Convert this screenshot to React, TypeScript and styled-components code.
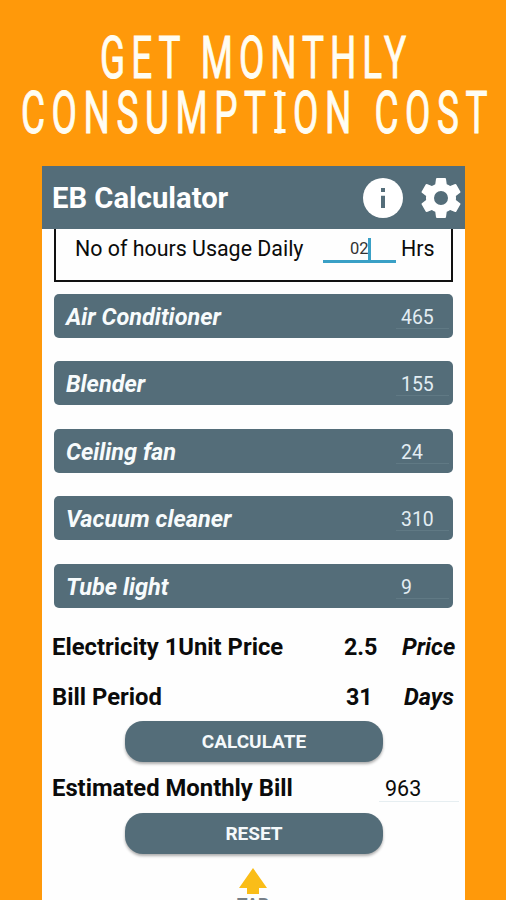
import React from "react";
import styled, { createGlobalStyle } from "styled-components";

const slate = "#546d79";
const orange = "#ff990a";
const cream = "#fffdf3";

const GlobalStyle = createGlobalStyle`
  *, *::before, *::after { box-sizing: border-box; }
  body { margin: 0; background: ${orange}; overflow: hidden; }
`;

const Page = styled.main`
  width: 506px;
  height: 900px;
  overflow: hidden;
  display: flex;
  flex-direction: column;
  background: ${orange};
  font-family: Roboto, "Liberation Sans", sans-serif;
  color: #0b0b0b;
`;

const Headline = styled.h1`
  margin: 0;
  height: 166px;
  flex: none;
  padding-top: 31px;
  display: flex;
  flex-direction: column;
  align-items: center;
  color: ${cream};
  font-size: 58.5px;
  font-weight: 400;
  line-height: 55px;
  white-space: nowrap;
`;

const HeadlineLine = styled.span<{ $spacing: number; $word: number; $shift: number }>`
  display: block;
  letter-spacing: ${(p) => p.$spacing}px;
  word-spacing: ${(p) => p.$word}px;
  transform: translateX(${(p) => p.$shift}px) scaleX(0.63);
  -webkit-text-stroke: 1px ${cream};
`;

const SlabLetter = styled.span`
  position: relative;
  padding: 0 3px;

  &::before,
  &::after {
    content: "";
    position: absolute;
    left: 2px;
    width: 18px;
    height: 4px;
    background: ${cream};
  }
  &::before { top: 13px; }
  &::after { bottom: 14px; }
`;

const Phone = styled.section`
  flex: 1;
  width: 423px;
  margin-left: 42px;
  background: #fefefe;
  display: flex;
  flex-direction: column;
  overflow: hidden;
`;

const AppBar = styled.header`
  height: 63px;
  flex: none;
  display: flex;
  align-items: center;
  gap: 18px;
  padding: 0 4px 0 10px;
  background: ${slate};
  color: #fff;
`;

const AppTitle = styled.h2`
  margin: 1px auto 0 0;
  font-size: 29.2px;
  font-weight: 700;
  line-height: 34px;
`;

const AppIcon = styled.svg`
  width: 40px;
  height: 40px;
  display: block;
`;

const Content = styled.div`
  padding: 0 12px;
`;

const UsageBox = styled.div`
  height: 53px;
  border: 2.5px solid #111;
  border-top: 0;
  display: flex;
  align-items: flex-start;
  padding: 4px 0 0 19px;
  font-size: 21.4px;
  line-height: 32px;
`;

const UsageLabel = styled.span`
  width: 248px;
  white-space: nowrap;
`;

const HoursField = styled.span`
  width: 73px;
  height: 30px;
  margin-right: 5px;
  padding: 5px 0 0 27px;
  display: flex;
  align-items: center;
  border-bottom: 3px solid #3aa0c6;
  font-size: 16.5px;
  color: #333;
`;

const Caret = styled.i`
  width: 3px;
  height: 22px;
  margin-left: -1px;
  background: #3aa0c6;
`;

const Appliances = styled.div`
  margin-top: 12px;
  display: flex;
  flex-direction: column;
  gap: 23.4px;
`;

const Appliance = styled.div`
  height: 44px;
  border-radius: 5px;
  background: ${slate};
  color: #f7fbfc;
  display: flex;
  align-items: center;
  justify-content: space-between;
  padding: 2px 4px 0 12px;
  font-size: 23.5px;
  font-weight: 700;
  font-style: italic;
`;

const Watts = styled.span`
  width: 53px;
  height: 24px;
  padding-left: 5px;
  border-bottom: 1px solid #607984;
  color: #e3edf3;
  font-size: 19.4px;
  font-weight: 400;
  font-style: normal;
  line-height: 26px;
`;

const Line = styled.div<{ $height: number; $after?: number }>`
  height: ${(p) => p.$height}px;
  margin: 0 -2px ${(p) => p.$after ?? 0}px;
  display: flex;
  align-items: center;
  font-size: 23.8px;
  font-weight: 700;
  white-space: nowrap;
`;

const Label = styled.span`
  flex: 1;
`;

const Amount = styled.span<{ $inset?: number }>`
  width: 58px;
  padding-left: ${(p) => p.$inset ?? 0}px;
  font-size: 23.3px;
`;

const Unit = styled.span<{ $inset?: number }>`
  width: 53px;
  padding-left: ${(p) => p.$inset ?? 0}px;
  font-style: italic;
  font-size: 23.5px;
`;

const Result = styled.span`
  width: 80px;
  height: 29px;
  margin-right: -4px;
  padding-left: 6px;
  border-bottom: 1.5px solid #e6eef1;
  font-size: 21.5px;
  font-weight: 400;
  line-height: 32px;
`;

const ActionButton = styled.button`
  display: block;
  width: 258px;
  height: 41px;
  margin: 0 0 0 71px;
  padding: 1px 0 0;
  border: 0;
  border-radius: 18px;
  background: ${slate};
  box-shadow: 0 2px 3px rgba(0, 0, 0, 0.32);
  color: #f5f9fb;
  font: 700 19px Roboto, "Liberation Sans", sans-serif;
`;

const ResultLine = styled(Line)`
  padding-top: 1px;
`;

const TopLink = styled.div`
  margin: 14px 1px 0 0;
  display: flex;
  flex-direction: column;
  align-items: center;
  color: #777f88;
  font-size: 17px;
  font-weight: 700;
  line-height: 21px;
`;

const Arrow = styled.svg`
  width: 28px;
  height: 26px;
  display: block;
`;

const appliances = [
  ["Air Conditioner", "465"],
  ["Blender", "155"],
  ["Ceiling fan", "24"],
  ["Vacuum cleaner", "310"],
  ["Tube light", "9"],
];

export default function App() {
  return (
    <Page>
      <GlobalStyle />
      <Headline>
        <HeadlineLine $spacing={9.5} $word={0} $shift={3.5}>GET MONTHLY</HeadlineLine>
        <HeadlineLine $spacing={10.5} $word={1} $shift={4}>
          CONSUMPT<SlabLetter>I</SlabLetter>ON COST
        </HeadlineLine>
      </Headline>
      <Phone>
        <AppBar>
          <AppTitle>EB Calculator</AppTitle>
          <AppIcon viewBox="0 0 40 40" aria-label="Info">
            <circle cx="20" cy="20" r="20" fill="#fff" />
            <path fill={slate} d="M18 10h4v4h-4zM18 17.7h4V30h-4z" />
          </AppIcon>
          <AppIcon viewBox="2 2 20 20" aria-label="Settings">
            <path
              fill="#fff"
              d="M19.43 12.98c.04-.32.07-.64.07-.98s-.03-.66-.07-.98l2.11-1.65c.19-.15.24-.42.12-.64l-2-3.46c-.12-.22-.39-.3-.61-.22l-2.49 1c-.52-.4-1.08-.73-1.69-.98l-.38-2.65A.49.49 0 0 0 14 2h-4c-.25 0-.46.18-.49.42l-.38 2.65c-.61.25-1.17.59-1.69.98l-2.49-1c-.23-.09-.49 0-.61.22l-2 3.46c-.13.22-.07.49.12.64l2.11 1.65c-.04.32-.07.65-.07.98s.03.66.07.98l-2.11 1.65c-.19.15-.24.42-.12.64l2 3.46c.12.22.39.3.61.22l2.49-1c.52.4 1.08.73 1.69.98l.38 2.65c.03.24.24.42.49.42h4c.25 0 .46-.18.49-.42l.38-2.65c.61-.25 1.17-.59 1.69-.98l2.49 1c.23.09.49 0 .61-.22l2-3.46c.12-.22.07-.49-.12-.64l-2.11-1.65zM12 15.5A3.5 3.5 0 1 1 12 8.500a3.5 3.5 0 0 1 0 7z"
            />
          </AppIcon>
        </AppBar>
        <Content>
          <UsageBox>
            <UsageLabel>No of hours Usage Daily</UsageLabel>
            <HoursField>
              02
              <Caret />
            </HoursField>
            <span>Hrs</span>
          </UsageBox>
          <Appliances>
            {appliances.map(([name, watts]) => (
              <Appliance key={name}>
                {name}
                <Watts>{watts}</Watts>
              </Appliance>
            ))}
          </Appliances>
          <Line $height={78}>
            <Label>Electricity 1Unit Price</Label>
            <Amount>2.5</Amount>
            <Unit>Price</Unit>
          </Line>
          <Line $height={22} $after={13}>
            <Label>Bill Period</Label>
            <Amount $inset={2}>31</Amount>
            <Unit $inset={2}>Days</Unit>
          </Line>
          <ActionButton>CALCULATE</ActionButton>
          <ResultLine $height={51}>
            <Label>Estimated Monthly Bill</Label>
            <Result>963</Result>
          </ResultLine>
          <ActionButton>RESET</ActionButton>
          <TopLink>
            <Arrow viewBox="0 0 28 26">
              <path fill="#fabd18" d="M14 0 28 20H20V26H8V20H0Z" />
            </Arrow>
            <span>TAP</span>
          </TopLink>
        </Content>
      </Phone>
    </Page>
  );
}
